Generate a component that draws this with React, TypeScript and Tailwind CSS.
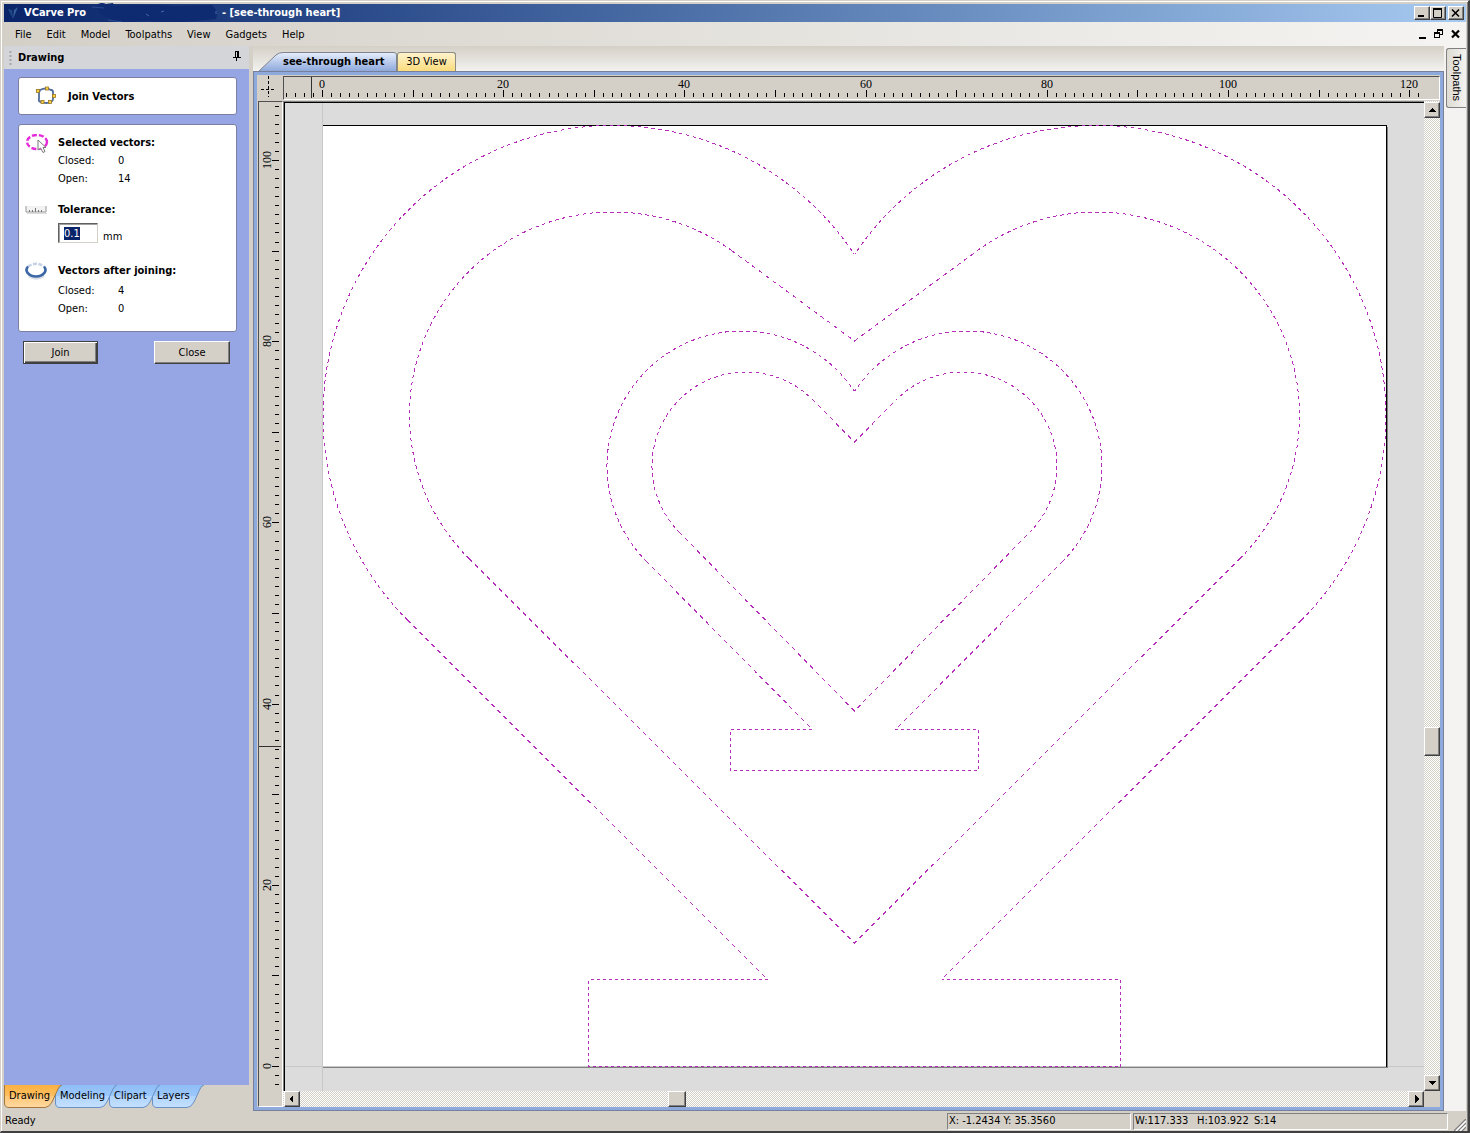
import { ReactNode, useEffect, useRef } from 'react';

// pixels per millimetre at the current zoom
const MM = 9.06;

const menuItems = ['File', 'Edit', 'Model', 'Toolpaths', 'View', 'Gadgets', 'Help'];

const paneTabs = [
  { name: 'Drawing', size: 58, className: 'z-40 w-[58px]', active: true },
  { name: 'Modeling', size: 62, className: 'z-30 -ml-[7px] w-[62px]', active: false },
  { name: 'Clipart', size: 51, className: 'z-20 -ml-2 w-[51px]', active: false },
  { name: 'Layers', size: 52, className: 'z-10 -ml-2 w-[52px]', active: false },
];

const raised =
  'bg-[#d4d0c8] border border-t-white border-l-white border-r-[#404040] border-b-[#404040] shadow-[inset_-1px_-1px_0_#808080]';
const sunken = 'border border-t-[#808080] border-l-[#808080] border-r-white border-b-white';
const hatch = 'bg-[repeating-conic-gradient(#d4d0c8_0_25%,#fff_0_50%)] bg-size-[2px_2px]';

function CaptionButton({ label, children }: { label: string; children: ReactNode }) {
  return (
    <button aria-label={label} className={`flex h-[14px] w-4 items-center justify-center ${raised}`}>
      <svg width="10" height="10" fill="none" stroke="#000">{children}</svg>
    </button>
  );
}

function TitleBar() {
  return (
    <header className="flex h-[18px] shrink-0 items-center bg-linear-to-r from-[#0a246a] to-[#a6caf0] pr-0.5 pl-1 text-white">
      <svg width="12" height="14" className="mr-1">
        <path d="M0 3L5 13L4 4Z" fill="#1f4a86" />
        <path d="M5 13L10 1L6 4Z" fill="#35609c" />
      </svg>
      <h1 className="flex items-center pt-px font-bold whitespace-pre">
        VCarve Pro
        <svg width="136" height="18" className="overflow-visible">
          <path
            d="M12 -1Q16 -3 20 -1L27 -2L28 1Q60 -1 90 1L126 0Q133 6 130 14Q90 19 60 16L42 17L38 19L34 17L16 11Q10 4 12 -1Z"
            fill="#0e2a70"
          />
          <path d="M6 2L18 3M22 15L36 17M126 19V22" stroke="#2a4a90" />
          <path d="M60 9L63 11M75 7L78 6M130 6V9" stroke="#4a66a4" />
        </svg>
        - [see-through heart]
      </h1>
      <div className="ml-auto flex">
        <CaptionButton label="Minimize"><path d="M1 8H7" strokeWidth="2" /></CaptionButton>
        <CaptionButton label="Maximize"><path d="M0.500 1V9.500H8.500V1M0 1.500H9M0 0.500H9" /></CaptionButton>
        <span className="w-0.5" />
        <CaptionButton label="Close"><path d="M1 1.500L8 8.500M8 1.500L1 8.500" strokeWidth="1.600" /></CaptionButton>
      </div>
    </header>
  );
}

function MenuBar() {
  return (
    <nav className="flex h-6 shrink-0 items-center gap-[15px] bg-linear-to-r from-[#d4d0c8] to-[#f5f4f2] pt-0.5 pr-1.5 pl-[11px]">
      {menuItems.map(item => <button key={item}>{item}</button>)}
      <div className="mb-0.5 ml-auto flex gap-[7px]">
        <button aria-label="Minimize document">
          <svg width="9" height="10"><path d="M1 9H8" stroke="#000" strokeWidth="2" /></svg>
        </button>
        <button aria-label="Restore document">
          <svg width="10" height="10" fill="none" stroke="#000" shapeRendering="crispEdges">
            <path d="M3 0.500H9M3 1.500H9M3.500 1V4M8.500 1V5.500H6M0 3.500H6M0 4.500H6M0.500 4V8.500H5.500V4" />
          </svg>
        </button>
        <button aria-label="Close document">
          <svg width="9" height="10"><path d="M1 1.500L8 8.500M8 1.500L1 8.500" stroke="#000" strokeWidth="2.200" /></svg>
        </button>
      </div>
    </nav>
  );
}

function Count({ label, value }: { label: string; value: number }) {
  return (
    <div className="flex h-[18px] items-center">
      <dt className="w-[60px]">{label}</dt>
      <dd>{value}</dd>
    </div>
  );
}

function JoinVectorsForm() {
  const tolerance = useRef<HTMLInputElement>(null);

  useEffect(() => {
    tolerance.current?.focus();
    tolerance.current?.select();
  }, []);

  return (
    <div className="flex-1 bg-[#96a5e4] pt-2 pr-3 pl-[14px]">
      <div className="flex h-[38px] items-center rounded-[3px] border border-[#7c80a0] bg-white pl-4">
        <svg width="22" height="20" fill="none">
          <path d="M5 4Q11 1 16 4Q18 4 18 6V13Q18 15 16 16Q11 18 7 16Q3 16 4 13V7Z" stroke="#4f6c9c" strokeWidth="1.800" />
          <g fill="#f6cf45" stroke="#9a7420" strokeWidth="0.800">
            <rect x="1.500" y="3.500" width="3" height="3" />
            <rect x="10.500" y="1" width="3" height="3" />
            <rect x="17.500" y="8.500" width="3" height="3" />
            <rect x="6" y="14.500" width="3" height="3" />
            <rect x="13.500" y="14.500" width="3" height="3" />
          </g>
        </svg>
        <h3 className="ml-[11px] pt-0.5 font-bold">Join Vectors</h3>
      </div>

      <div className="mt-[9px] h-[208px] rounded-[3px] border border-[#7c80a0] bg-white px-1.5 pt-[9px]">
        <section className="flex">
          <svg width="24" height="22" className="mr-[9px] shrink-0" fill="none">
            <ellipse cx="12" cy="8" rx="10" ry="7" stroke="#e62bd8" strokeWidth="2.400" strokeDasharray="5 2" />
            <path d="M13 6V16L15.500 14L18 18.500L20 17.500L18 13.500H21Z" fill="#fff" stroke="#777" />
          </svg>
          <div>
            <h3 className="h-[18px] leading-[18px] font-bold">Selected vectors:</h3>
            <dl>
              <Count label="Closed:" value={0} />
              <Count label="Open:" value={14} />
            </dl>
          </div>
        </section>

        <section className="mt-[13px] flex">
          <svg width="24" height="18" className="mr-[9px] shrink-0" fill="none">
            <path d="M1 5V11H21V5Z" fill="#f2f2f2" />
            <path d="M1 5V11H21V5" stroke="#999" />
            <path d="M4.500 9V11M7.500 9V11M10.500 7V11M13.500 9V11M16.500 9V11" stroke="#777" />
            <path d="M2 12.500H22" stroke="#ddd" />
          </svg>
          <div>
            <label htmlFor="tolerance" className="block h-[18px] leading-[18px] font-bold">Tolerance:</label>
            <div className="mt-1 flex">
              <input
                ref={tolerance}
                id="tolerance"
                defaultValue="0.1"
                className="h-5 w-10 border border-t-[#606060] border-r-[#d4d0c8] border-b-[#d4d0c8] border-l-[#606060] px-[5px] shadow-[inset_1px_1px_0_#a0a0a0] outline-none selection:bg-[#0a246a] selection:text-white"
              />
              <span className="mt-1.5 ml-[5px]">mm</span>
            </div>
          </div>
        </section>

        <section className="mt-4 flex">
          <svg width="24" height="20" className="mr-[9px] shrink-0" fill="none" strokeWidth="2.600">
            <path d="M4 14Q11 19 19 14" stroke="#d8dde6" />
            <path d="M3 4.500Q11 -1 19 4.500" stroke="#c5d3e6" strokeDasharray="4 1.500" />
            <path d="M3 4.500C-1 9 4 14.500 11 14.500S23 9 19 4.500" stroke="#3c67a6" />
          </svg>
          <div>
            <h3 className="h-[18px] leading-[18px] font-bold">Vectors after joining:</h3>
            <dl className="mt-[3px]">
              <Count label="Closed:" value={4} />
              <Count label="Open:" value={0} />
            </dl>
          </div>
        </section>
      </div>

      <div className="mt-[9px] ml-[5px] flex gap-14">
        <button className="h-[23px] w-[75px] border border-[#404040] bg-[#d4d0c8] pt-0.5 shadow-[inset_1px_1px_0_#fff,inset_-1px_-1px_0_#404040,inset_-2px_-2px_0_#808080]">
          Join
        </button>
        <button className={`h-[23px] w-[76px] pt-0.5 ${raised}`}>Close</button>
      </div>
    </div>
  );
}

function DrawingPane() {
  return (
    <aside className="mr-1 flex w-[245px] shrink-0 flex-col">
      <header className="flex h-[23px] shrink-0 items-center bg-[#d3d5d9] px-[5px]">
        <svg width="3" height="14" className="mr-1.5">
          <path d="M1.500 0V14" stroke="#a4a6aa" strokeWidth="2" strokeDasharray="2 2" />
        </svg>
        <h2 className="pt-0.5 font-bold">Drawing</h2>
        <button aria-label="Auto hide" className="mr-[3px] mb-[3px] ml-auto">
          <svg width="8" height="10" fill="none" stroke="#000" shapeRendering="crispEdges">
            <path d="M2.500 6V0.500H5.500V6M4.500 1V6M0 6.500H8M3.500 7V10" />
          </svg>
        </button>
      </header>
      <JoinVectorsForm />
      <div role="tablist" className="flex h-[26px] shrink-0">
        {paneTabs.map(({ name, size: w, className, active }) => (
          <button key={name} role="tab" aria-selected={active} className={`relative h-[23px] pl-[5px] text-left ${className}`}>
            <svg width={w} height="23" className="absolute top-0 left-0">
              <defs>
                <linearGradient id={`tab-${name}`} x2="0" y2="1">
                  <stop offset="0" stopColor={active ? '#fbb040' : '#8fbdf6'} />
                  <stop offset="0.500" stopColor={active ? '#fdc063' : '#9cc8fb'} />
                  <stop offset="0.500" stopColor={active ? '#ffc778' : '#b0d4ff'} />
                  <stop offset="1" stopColor={active ? '#ffd9a0' : '#c4e0ff'} />
                </linearGradient>
              </defs>
              <path
                d={`M0.500 0V18Q0.500 22.500 5 22.500H${w - 17}Q${w - 13} 22.500 ${w - 10} 17L${w - 4} 4Q${w - 2} 0 ${w} 0`}
                fill={`url(#tab-${name})`}
                stroke={active ? '#a07840' : '#6a90c4'}
              />
            </svg>
            <span className="relative">{name}</span>
          </button>
        ))}
      </div>
    </aside>
  );
}

function TopRuler() {
  const ticks = Array.from({ length: 126 }, (_, i) => i - 4);
  return (
    <svg className="block h-full w-full" shapeRendering="crispEdges">
      <rect x="27" y="0" width="1" height="21" fill="#303030" />
      {ticks.map(t => {
        const x = Math.round(38 + t * MM);
        return (
          <g key={t}>
            <rect x={x} y={t % 10 === 0 ? 13 : 16} width="1" height={t % 10 === 0 ? 7 : 4} />
            {t % 20 === 0 && (
              <text x={x} y="11" textAnchor="middle" className="font-['Liberation_Serif',serif] text-[12px]">{t}</text>
            )}
          </g>
        );
      })}
    </svg>
  );
}

function SideRuler() {
  const ticks = Array.from({ length: 109 }, (_, i) => i - 2);
  return (
    <svg className="block h-full w-full" shapeRendering="crispEdges">
      <rect x="0" y="644" width="22" height="1" fill="#303030" />
      {ticks.map(t => {
        const y = Math.round(964 - t * MM);
        return (
          <g key={t}>
            <rect x={t % 10 === 0 ? 13 : 16} y={y} width={t % 10 === 0 ? 7 : 4} height="1" />
            {t % 20 === 0 && (
              <text
                transform={`translate(12 ${y}) rotate(-90)`}
                textAnchor="middle"
                className="font-['Liberation_Serif',serif] text-[12px]"
              >
                {t}
              </text>
            )}
          </g>
        );
      })}
    </svg>
  );
}

function Drawing() {
  return (
    <svg className="block h-full w-full border-t border-l border-black bg-[#dcdcdc]">
      <g transform="translate(-285 -103)" shapeRendering="crispEdges">
        <rect x="323" y="126" width="1063" height="941" fill="#fff" />
        <path d="M322.500 103V1091M285 1066.500H1424" stroke="#c8c8c8" />
        <path d="M1387.500 127V1068M323 1067.500H1388" stroke="#808080" />
        <path d="M323 125.500H1387M1386.500 125V1067" stroke="#000" />
        <g fill="none" stroke="#b42cb8">
          {/* arcs */}
          <g strokeDasharray="3.500 3.500">
            <path d="M407.440 620.060A290 290 0 0 1 612.500 125.500A290 290 0 0 1 854.500 254.500" />
            <path d="M1301.560 620.060A290 290 0 0 0 1096.500 125.500A290 290 0 0 0 854.500 254.500" />
            <path d="M468.960 558.540A203 203 0 0 1 612.500 212A203 203 0 0 1 731.500 250.500" />
            <path d="M1240.040 558.540A203 203 0 0 0 1096.500 212A203 203 0 0 0 977.500 250.500" />
            <path d="M646.540 561.460A135 135 0 0 1 742 331A135 135 0 0 1 854.500 391.400" />
            <path d="M1062.460 561.460A135 135 0 0 0 967 331A135 135 0 0 0 854.500 391.400" />
            <path d="M679.530 532.470A94 94 0 0 1 746 372A94 94 0 0 1 812.470 399.530" />
            <path d="M1029.470 532.470A94 94 0 0 0 963 372A94 94 0 0 0 896.530 399.530" />
          </g>
          {/* diagonals */}
          <g strokeDasharray="4.240 4.240">
            <path d="M407.440 620.060L767 979M1301.560 620.060L942 979" />
            <path d="M731.500 250.500L854.500 341L977.500 250.500M468.960 558.540L854.500 943L1240.040 558.540" />
            <path d="M646.540 561.460L812 729M1062.460 561.460L896 729" />
            <path d="M812.470 399.530L854.500 442L896.530 399.530M679.530 532.470L854.500 711L1029.470 532.470" />
          </g>
          {/* stands */}
          <g strokeDasharray="3 3">
            <path d="M767.500 979.500H588.500V1066.500H1120.500V979.500H942" />
            <path d="M812 729.500H730.500V770.500H978.500V729.500H894" />
          </g>
        </g>
      </g>
    </svg>
  );
}

function ScrollArrow({ label, points }: { label: string; points: string }) {
  return (
    <button aria-label={label} className={`flex h-4 w-4 shrink-0 items-center justify-center ${raised}`}>
      <svg width="8" height="8" shapeRendering="crispEdges"><polygon points={points} /></svg>
    </button>
  );
}

function DocumentTabs() {
  return (
    <div role="tablist" className="flex h-[25px] shrink-0 items-end bg-linear-to-b from-[#d4d0c8] to-[#f3f2ee] pl-1.5">
      <button role="tab" aria-selected="true" className="relative h-[19px] w-[138px] pt-0.5 pl-6 text-left font-bold">
        <svg width="138" height="19" className="absolute top-0 left-0">
          <defs>
            <linearGradient id="doc-tab" x2="0" y2="1">
              <stop offset="0" stopColor="#e6eefc" />
              <stop offset="1" stopColor="#8ea9dc" />
            </linearGradient>
          </defs>
          <path d="M0 19L17 3Q20 0.500 24 0.500H135Q137.500 0.500 137.500 3V19" fill="url(#doc-tab)" stroke="#80848c" />
        </svg>
        <span className="relative">see-through heart</span>
      </button>
      <button role="tab" aria-selected="false" className="h-[19px] w-[59px] rounded-t-[3px] border border-b-0 border-[#8c8c84] bg-linear-to-b from-[#fdf3cc] to-[#fbdc7c]">
        3D View
      </button>
    </div>
  );
}

function DocumentArea() {
  return (
    <main className="flex min-w-0 flex-1 flex-col">
      <DocumentTabs />
      <div className="flex min-h-0 flex-1 flex-col border border-[#76809a] bg-[#8ea9dc] p-[3px]">
        <div className="flex h-[26px] shrink-0 bg-[#d4d0c8]">
          <div className="w-[26px] shrink-0">
            <svg width="26" height="26" stroke="#000" shapeRendering="crispEdges">
              <path d="M11.500 1V22" strokeDasharray="3 2" />
              <path d="M4 14.500H19" strokeDasharray="3 2" />
            </svg>
          </div>
          <div className="mt-px mb-px min-w-0 flex-1 border border-t-[#505050] border-r-white border-b-white border-l-[#505050]">
            <TopRuler />
          </div>
        </div>
        <div className="flex min-h-0 flex-1 bg-[#d4d0c8]">
          <div className="ml-px w-[25px] shrink-0 border border-t-[#505050] border-r-white border-b-white border-l-[#505050]">
            <SideRuler />
          </div>
          <div className="flex min-w-0 flex-1 flex-col">
            <div className="min-h-0 flex-1 border-t border-l border-[#808080]">
              <Drawing />
            </div>
            <div className={`flex h-4 shrink-0 pl-px ${hatch}`}>
              <ScrollArrow label="Scroll left" points="5,0 5,8 1,4" />
              <div className="grow-[368]" />
              <div className={`w-[18px] ${raised}`} />
              <div className="grow-[722]" />
              <ScrollArrow label="Scroll right" points="3,0 3,8 7,4" />
            </div>
          </div>
          <div className="flex w-4 shrink-0 flex-col">
            <div className={`flex flex-1 flex-col pt-px ${hatch}`}>
              <ScrollArrow label="Scroll up" points="0,6 8,6 4,2" />
              <div className="grow-[609]" />
              <div className={`h-[29px] ${raised}`} />
              <div className="grow-[319]" />
              <ScrollArrow label="Scroll down" points="0,2 8,2 4,6" />
            </div>
            <div className="h-4 bg-[#d4d0c8]" />
          </div>
        </div>
      </div>
    </main>
  );
}

function StatusBar() {
  return (
    <footer className="flex h-5 shrink-0 items-center pt-px pl-px">
      <span>Ready</span>
      <div className={`ml-auto flex h-[17px] w-[184px] items-center gap-[3px] pl-px ${sunken}`}>
        <span>X: -1.2434</span>
        <span>Y: 35.3560</span>
      </div>
      <div className={`ml-0.5 flex h-[17px] w-[315px] items-center pl-px ${sunken}`}>
        <span className="w-[62px]">W:117.333</span>
        <span className="w-[57px]">H:103.922</span>
        <span>S:14</span>
      </div>
      <svg width="12" height="12" className="mt-1.5 ml-1.5" strokeWidth="1.400">
        <path d="M0 12L12 0M4 12L12 4M8 12L12 8" stroke="#808080" />
        <path d="M2 12L12 2M6 12L12 6" stroke="#fff" />
      </svg>
    </footer>
  );
}

export default function App() {
  return (
    <div className="flex h-screen flex-col border-t border-r-2 border-b-2 border-l border-t-[#d4d0c8] border-r-[#404040] border-b-[#404040] border-l-[#d4d0c8] bg-[#d4d0c8] pt-[3px] pr-0.5 pl-[3px] font-['DejaVu_Sans_Condensed','DejaVu_Sans',sans-serif] text-[11px] text-black shadow-[inset_1px_1px_0_#fff,inset_-1px_0_0_#808080]">
      <TitleBar />
      <MenuBar />
      <div className="flex min-h-0 flex-1">
        <DrawingPane />
        <DocumentArea />
        <div className="w-[22px] shrink-0 bg-[#f4f3f1] pt-0.5 pl-0.5">
          <button className="h-[60px] w-5 rounded-l-[3px] border border-r-0 border-[#808080] bg-linear-to-r from-[#dedbd4] to-[#f4f3f1] font-['Liberation_Sans',sans-serif] [writing-mode:vertical-rl]">
            Toolpaths
          </button>
        </div>
      </div>
      <StatusBar />
    </div>
  );
}
